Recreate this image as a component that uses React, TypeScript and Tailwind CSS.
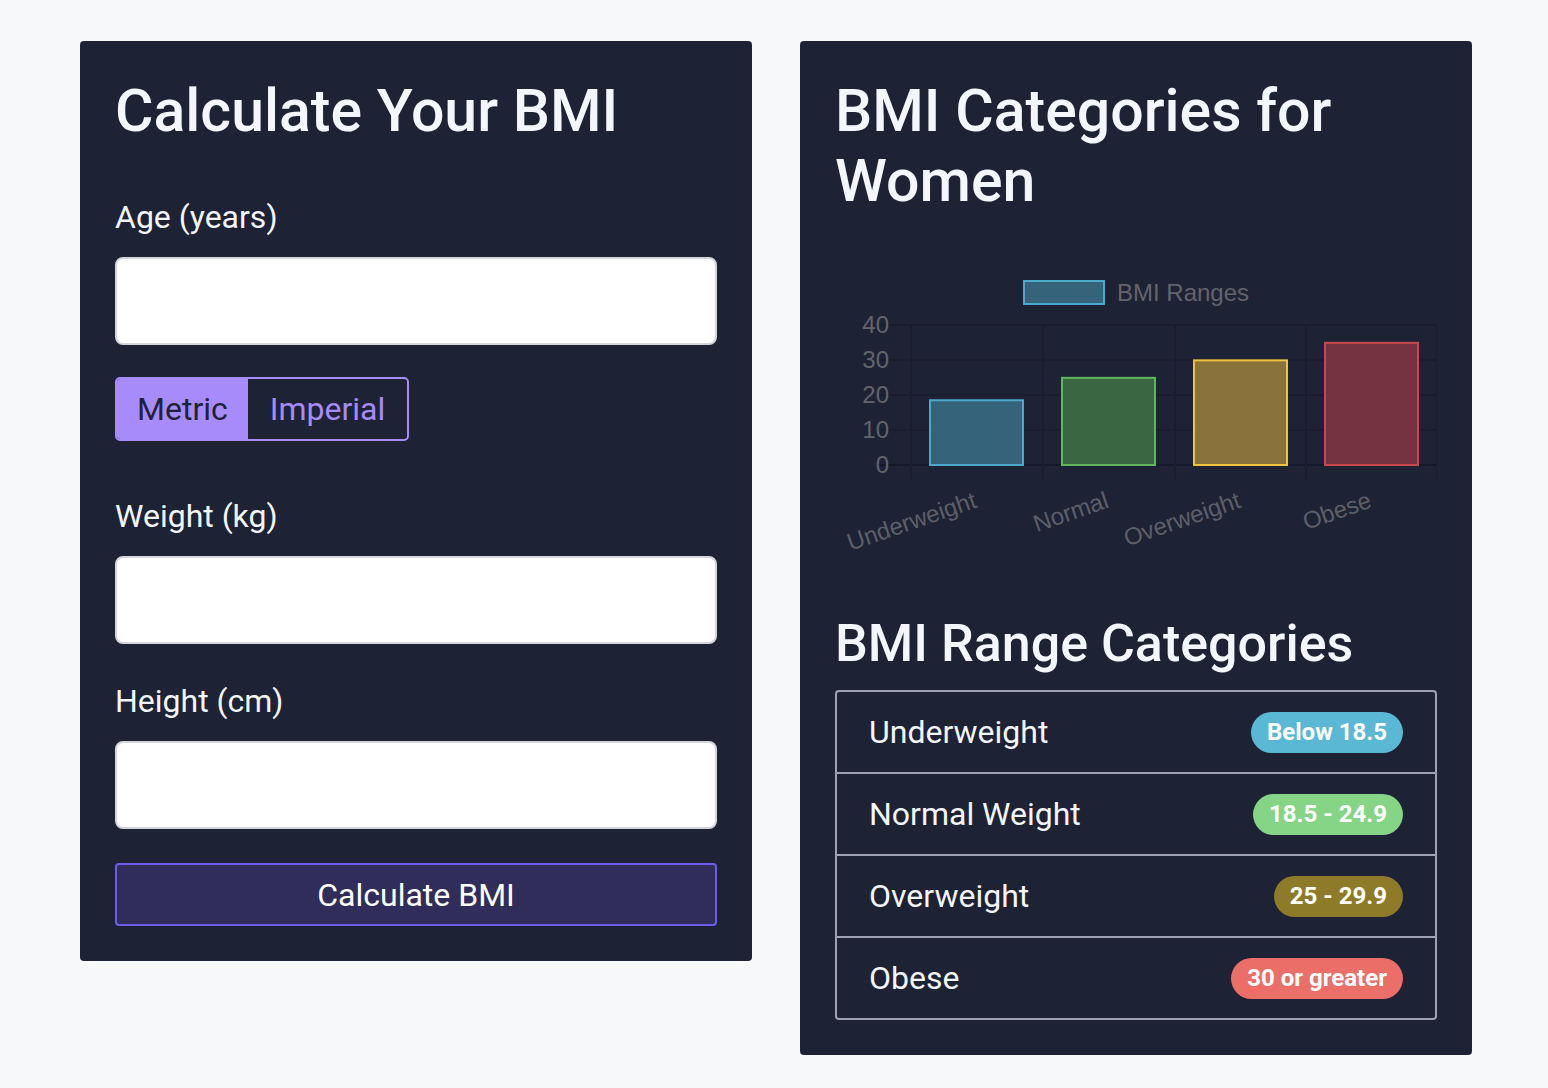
import React from "react";

const sans = "font-['Roboto','Noto_Sans',sans-serif]";

type Bar = { label: string; value: number; fill: string; stroke: string };

const bars: Bar[] = [
  { label: "Underweight", value: 18.5, fill: "#35637a", stroke: "#4ba9c9" },
  { label: "Normal", value: 24.9, fill: "#3a6642", stroke: "#5fb65f" },
  { label: "Overweight", value: 29.9, fill: "#89733b", stroke: "#f0c33f" },
  { label: "Obese", value: 34.9, fill: "#74333f", stroke: "#c9474f" },
];

const ranges = [
  { name: "Underweight", range: "Below 18.5", color: "bg-[#5bb8d5]" },
  { name: "Normal Weight", range: "18.5 - 24.9", color: "bg-[#86d486]" },
  { name: "Overweight", range: "25 - 29.9", color: "bg-[#8e7b29]" },
  { name: "Obese", range: "30 or greater", color: "bg-[#ec6e68]" },
];

const BmiChart = () => {
  const zeroY = 465;
  const perUnit = 3.5;
  const colX = [911, 1043, 1175, 1306, 1437];
  const ticks = [40, 30, 20, 10, 0];
  const font = "'Liberation Sans', Arial, sans-serif";

  return (
    <svg width="602" height="397" viewBox="835 216 602 397" className="block">
      {/* legend */}
      <rect x="1024" y="281" width="80" height="23" fill="#35637a" stroke="#4ba9c9" strokeWidth="2" />
      <text x="1117" y="301" fontSize="24" fill="#62646c" fontFamily={font}>
        BMI Ranges
      </text>

      {/* grid */}
      {ticks.map((t) => {
        const y = zeroY - t * perUnit;
        return (
          <g key={t}>
            <line x1="877" x2="1437" y1={y} y2={y} stroke={t === 0 ? "#15182a" : "#1a1d2d"} strokeWidth="2" />
            <text x="889" y={y + 8} fontSize="24" textAnchor="end" fill="#62646c" fontFamily={font}>
              {t}
            </text>
          </g>
        );
      })}
      {colX.map((x) => (
        <line key={x} x1={x} x2={x} y1="325" y2="480" stroke="#1a1d2d" strokeWidth="2" />
      ))}

      {/* bars */}
      {bars.map((b, i) => {
        const h = b.value * perUnit;
        return (
          <rect
            key={b.label}
            x={colX[i] + 19}
            y={zeroY - h}
            width="93"
            height={h}
            fill={b.fill}
            stroke={b.stroke}
            strokeWidth="2"
          />
        );
      })}

      {/* x labels */}
      {bars.map((b, i) => {
        const cx = colX[i] + 67;
        return (
          <text
            key={b.label}
            x={cx}
            y={507}
            fontSize="24"
            textAnchor="end"
            fill="#5d5f68"
            fontFamily={font}
            transform={`rotate(-19 ${cx} 507)`}
          >
            {b.label}
          </text>
        );
      })}
    </svg>
  );
};

const Field = ({ label, className }: { label: string; className: string }) => (
  <div className={className}>
    <label className="block text-[32px] leading-[40px] text-[#f3f5f9]">{label}</label>
    <input
      type="text"
      className="mt-[20px] block h-[88px] w-full rounded-lg border-2 border-[#d4d6dc] bg-white px-4 text-[28px] text-gray-900 outline-none"
    />
  </div>
);

export default function App() {
  return (
    <div className={`min-h-screen bg-[#f7f8fa] ${sans}`}>
      <div className="flex items-start gap-12 pl-[80px] pt-[41px]">
        {/* calculator */}
        <div className="w-[672px] shrink-0 rounded-[4px] bg-[#1e2235] p-[35px]">
          <h1 className="text-[59px] font-medium leading-[70px] text-[#f3f6fa]">Calculate Your BMI</h1>

          <Field label="Age (years)" className="mt-[51px]" />

          <div className="mt-[32px] flex w-max overflow-hidden rounded-[5px] border-2 border-[#a78bfa]">
            <button className="h-[60px] bg-[#a78bfa] px-[20px] text-[32px] text-[#1e2235]">Metric</button>
            <button className="h-[60px] px-[22px] text-[32px] text-[#a78bfa]">Imperial</button>
          </div>

          <Field label="Weight (kg)" className="mt-[55px]" />
          <Field label="Height (cm)" className="mt-[37px]" />

          <button className="mt-[34px] h-[63px] w-full rounded-[4px] border-2 border-[#6c5ce7] bg-[#302d5a] text-[32px] text-white">
            Calculate BMI
          </button>
        </div>

        {/* categories */}
        <div className="w-[672px] shrink-0 rounded-[4px] bg-[#1e2235] p-[35px]">
          <h1 className="text-[59px] font-medium leading-[70px] text-[#f3f6fa]">
            BMI Categories for
            <br />
            Women
          </h1>

          <BmiChart />

          <h2 className="text-[52px] font-medium leading-[62px] text-[#f3f6fa]">BMI Range Categories</h2>

          <div className="mt-[15px] overflow-hidden rounded-[4px] border-2 border-[#9ea2b3]">
            {ranges.map((r, i) => (
              <div
                key={r.name}
                className={`flex items-center justify-between px-[32px] ${
                  i > 0 ? "h-[82px] border-t-2 border-[#9ea2b3]" : "h-[80px]"
                }`}
              >
                <span className="text-[32px] text-[#f3f5f9]">{r.name}</span>
                <span
                  className={`rounded-full px-[16px] text-[24px] font-bold leading-[41px] text-white ${r.color}`}
                >
                  {r.range}
                </span>
              </div>
            ))}
          </div>
        </div>
      </div>
    </div>
  );
}
